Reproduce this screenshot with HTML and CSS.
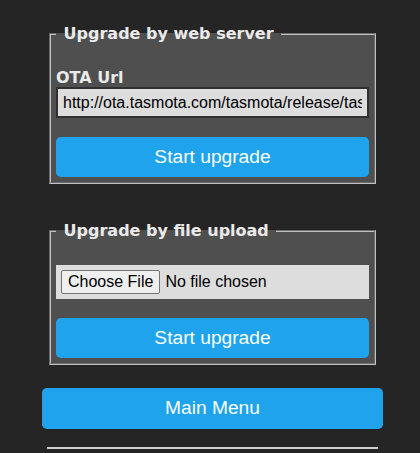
FILE: index.html
```html
<!DOCTYPE html>
<html lang="en">
<head>
    <meta charset="UTF-8">
    <meta name="viewport" content="width=device-width, initial-scale=1.0">
    <title>Firmware Upgrade</title>
    <link rel="stylesheet" href="styles.css">
</head>
<body>
    <div class="main">
        <fieldset class="upg-box first">
            <legend>&nbsp;Upgrade by web server&nbsp;</legend>
            <form class="upg-form" method="get" action="u1">
                <label class="field-label" for="otaUrl">OTA Url</label>
                <input id="otaUrl" class="url-input" value="http://ota.tasmota.com/tasmota/release/tasmota.bin.gz">
                <button type="submit" class="btn">Start upgrade</button>
            </form>
        </fieldset>

        <fieldset class="upg-box">
            <legend>&nbsp;Upgrade by file upload&nbsp;</legend>
            <form class="upg-form" method="post" action="u2" enctype="multipart/form-data">
                <input type="file" name="u2" class="file-input">
                <button type="submit" class="btn">Start upgrade</button>
            </form>
        </fieldset>

        <button class="btn menu-btn">Main Menu</button>
        <hr class="footer-line">
    </div>
</body>
</html>
```

FILE: styles.css
```css
body {
    margin: 0;
    background: #252525;
    color: #eaeaea;
    font-family: 'DejaVu Sans', Verdana, sans-serif;
    overflow: hidden;
}

.main {
    width: 341px;
    margin-left: 42px;
    display: flex;
    flex-direction: column;
}

.upg-box {
    margin: 37px 7px 0;
    padding: 5px;
    background: #4f4f4f;
    border: 2px groove #c0c0c0;
    min-width: 0;
}

.upg-box.first {
    margin-top: 24px;
}

.upg-box legend {
    padding: 0 2px;
    font-weight: bold;
    font-size: 16px;
    line-height: 19px;
}

.upg-form {
    display: flex;
    flex-direction: column;
    margin: 0;
    padding-top: 20px; /* blank line above the fields */
}

.field-label {
    font-weight: bold;
    font-size: 16px;
    line-height: 19px;
}

.url-input {
    box-sizing: border-box;
    width: 100%;
    height: 31px;
    padding: 5px;
    margin: 0;
    border: 2px solid #303030;
    background: #dddddd;
    color: #000;
    font-family: 'Liberation Sans', Arial, sans-serif;
    font-size: 16px;
}

.file-input {
    box-sizing: border-box;
    width: 100%;
    height: 34px;
    padding: 5px;
    margin: 0;
    border: 0;
    background: #dddddd;
    color: #000;
    font-family: 'Liberation Sans', Arial, sans-serif;
    font-size: 16px;
}

.file-input::file-selector-button {
    height: 24px;
    padding: 0 6px;
    margin-right: 5px;
    border: 1px solid #767676;
    border-radius: 2px;
    background: #efefef;
    color: #000;
    font-family: 'Liberation Sans', Arial, sans-serif;
    font-size: 16px;
}

.btn {
    display: block;
    width: 100%;
    height: 40px;
    margin-top: 19px;
    padding: 0 6px;
    border: 0;
    border-radius: 0.3rem;
    background: #1fa3ec;
    color: #faffff;
    font-family: 'Liberation Sans', Arial, sans-serif;
    font-size: 1.2rem;
    line-height: 2.4rem;
    cursor: pointer;
}

.btn:hover {
    background: #0e70a4;
}

.menu-btn {
    height: 41px;
    margin-top: 23px;
}

.footer-line {
    margin: 18px 5px 0;
    border: 0;
    border-top: 2px solid #cfcfcf;
}
```
